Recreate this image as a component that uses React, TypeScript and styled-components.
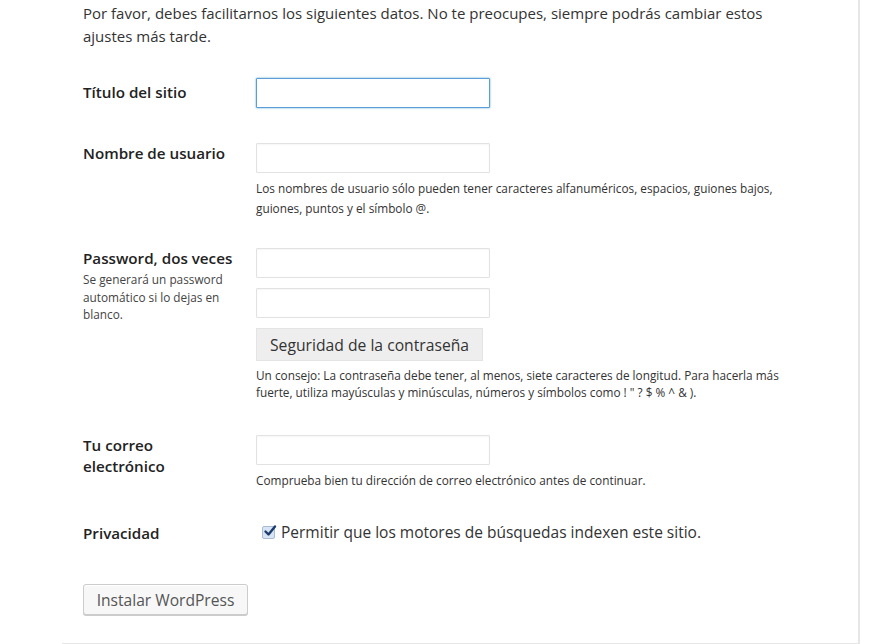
import styled, { createGlobalStyle } from "styled-components";

const GlobalStyle = createGlobalStyle`
  html, body {
    margin: 0;
    padding: 0;
    background: #fff;
  }
  body {
    font-family: "Open Sans", "Liberation Sans", sans-serif;
    color: #333;
    overflow: hidden;
  }
`;

const Card = styled.div`
  margin-left: 62px;
  width: 798px;
  box-sizing: border-box;
  padding: 2px 20px 28px 21px;
  background: #fff;
  border-right: 2px solid #e6e6e6;
  border-bottom: 2px solid #e6e6e6;
`;

const Intro = styled.p`
  margin: 0 0 30px;
  font-size: 15px;
  line-height: 23px;
  color: #333;
`;

const Row = styled.div<{ $gap: number }>`
  display: grid;
  grid-template-columns: 173px 1fr;
  align-items: start;
  margin-bottom: ${(p) => p.$gap}px;
`;

const Label = styled.div<{ $top?: number }>`
  padding-top: ${(p) => p.$top ?? 0}px;
  font-size: 15.2px;
  font-weight: 600;
  line-height: 21px;
  color: #222;
`;

const LabelNote = styled.div`
  margin-top: 2px;
  font-size: 11.8px;
  font-weight: 400;
  line-height: 17.5px;
  color: #444;
`;

const Field = styled.div`
  display: flex;
  flex-direction: column;
  align-items: flex-start;
`;

const Input = styled.input<{ $focused?: boolean }>`
  width: 234px;
  height: 30px;
  box-sizing: border-box;
  margin: 0;
  border: 1px solid ${(p) => (p.$focused ? "#5b9dd9" : "#e2e2e2")};
  border-radius: 1px;
  background: #fff;
  box-shadow: ${(p) =>
    p.$focused
      ? "0 0 2px rgba(30, 140, 190, 0.8)"
      : "inset 0 1px 2px rgba(0, 0, 0, 0.04)"};
  outline: none;
  & + & {
    margin-top: 10px;
  }
`;

const Hint = styled.p<{ $lh: number; $top: number }>`
  margin: ${(p) => p.$top}px 0 0;
  font-size: 11.8px;
  line-height: ${(p) => p.$lh}px;
  color: #333;
  white-space: nowrap;
`;

const StrengthBox = styled.div`
  margin-top: 10px;
  width: 227px;
  height: 33px;
  box-sizing: border-box;
  padding-left: 13px;
  display: flex;
  align-items: center;
  background: #eeeeee;
  border: 1px solid #e4e4e4;
  font-size: 15.7px;
  color: #333;
`;

const CheckLine = styled.label`
  display: flex;
  align-items: center;
  gap: 6px;
  font-size: 15.5px;
  line-height: 20px;
  color: #333;
`;

const CheckBox = styled.span`
  width: 11px;
  height: 11px;
  margin-left: 6px;
  border: 1px solid #a9bcd4;
  border-radius: 2px;
  background: #d6e4f3;
  display: inline-flex;
  position: relative;
  flex: none;
  svg {
    position: absolute;
    left: 0;
    top: -3px;
  }
`;

const Submit = styled.button`
  width: 165px;
  height: 31px;
  box-sizing: border-box;
  padding: 0;
  border: 1px solid #ccc;
  border-radius: 3px;
  background: #f7f7f7;
  box-shadow: 0 1px 0 #ccc, inset 0 1px 0 #fff;
  font-family: "Open Sans", "Liberation Sans", sans-serif;
  font-size: 15.6px;
  color: #555;
  text-align: center;
`;

export default function App() {
  return (
    <>
      <GlobalStyle />
      <Card>
        <Intro>
          Por favor, debes facilitarnos los siguientes datos. No te preocupes,
          siempre podrás cambiar estos
          <br />
          ajustes más tarde.
        </Intro>

        <Row $gap={35}>
          <Label $top={4}>Título del sitio</Label>
          <Field>
            <Input $focused />
          </Field>
        </Row>

        <Row $gap={30}>
          <Label>Nombre de usuario</Label>
          <Field>
            <Input />
            <Hint $lh={20} $top={5}>
              Los nombres de usuario sólo pueden tener caracteres
              alfanuméricos, espacios, guiones bajos,
              <br />
              guiones, puntos y el símbolo @.
            </Hint>
          </Field>
        </Row>

        <Row $gap={34}>
          <Label>
            Password, dos veces
            <LabelNote>
              Se generará un password
              <br />
              automático si lo dejas en
              <br />
              blanco.
            </LabelNote>
          </Label>
          <Field>
            <Input />
            <Input />
            <StrengthBox>Seguridad de la contraseña</StrengthBox>
            <Hint $lh={17} $top={6}>
              Un consejo: La contraseña debe tener, al menos, siete caracteres
              de longitud. Para hacerla más
              <br />
              fuerte, utiliza mayúsculas y minúsculas, números y símbolos como
              ! " ? $ % ^ &amp; ).
            </Hint>
          </Field>
        </Row>

        <Row $gap={32}>
          <Label>
            Tu correo
            <br />
            electrónico
          </Label>
          <Field>
            <Input />
            <Hint $lh={20} $top={5}>
              Comprueba bien tu dirección de correo electrónico antes de
              continuar.
            </Hint>
          </Field>
        </Row>

        <Row $gap={40}>
          <Label $top={1}>Privacidad</Label>
          <Field>
            <CheckLine>
              <CheckBox>
                <svg width="14" height="14" viewBox="0 0 14 14">
                  <path
                    d="M2.5 7.5 L5.5 10.5 L12 2.5"
                    fill="none"
                    stroke="#1d3b6b"
                    strokeWidth="2.4"
                    strokeLinecap="round"
                    strokeLinejoin="round"
                  />
                </svg>
              </CheckBox>
              Permitir que los motores de búsquedas indexen este sitio.
            </CheckLine>
          </Field>
        </Row>

        <Submit type="button">Instalar WordPress</Submit>
      </Card>
    </>
  );
}
